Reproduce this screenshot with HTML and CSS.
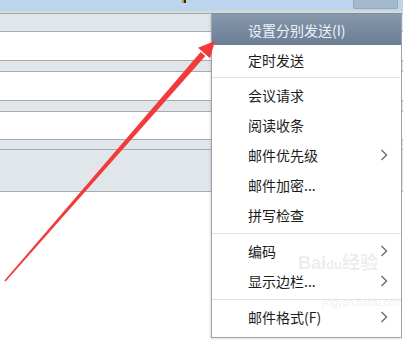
FILE: index.html
```html
<!DOCTYPE html>
<html lang="zh-CN">

<head>
    <meta charset="UTF-8">
    <meta name="viewport" content="width=device-width, initial-scale=1.0">
    <title>邮件选项菜单</title>
    <link rel="stylesheet" href="styles.css">
</head>

<body>
    <div class="screen">
        <div class="titlebar">
            <span class="title-icon"></span>
            <span class="title-btn"></span>
        </div>
        <div class="rule-green"></div>
        <div class="rule-light"></div>
        <div class="rule-dark"></div>

        <div class="band grey h17"></div>
        <div class="band white h28"></div>
        <div class="band grey h10"></div>
        <div class="band white h28"></div>
        <div class="band grey h10"></div>
        <div class="band white h27"></div>
        <div class="band grey h9"></div>
        <div class="band grey h41"></div>
        <div class="band white rest"></div>

        <!-- dropdown menu -->
        <div class="menu">
            <div class="menu-head">设置分别发送(I)</div>
            <div class="menu-item">定时发送</div>
            <div class="menu-sep"></div>
            <div class="menu-item">会议请求</div>
            <div class="menu-item">阅读收条</div>
            <div class="menu-item">邮件优先级
                <svg class="chev" width="8" height="12" viewBox="0 0 8 12"><polyline points="1.5,1 6.5,6 1.5,11" /></svg>
            </div>
            <div class="menu-item">邮件加密...</div>
            <div class="menu-item">拼写检查</div>
            <div class="menu-sep sep-wide"></div>
            <div class="menu-item">编码
                <svg class="chev" width="8" height="12" viewBox="0 0 8 12"><polyline points="1.5,1 6.5,6 1.5,11" /></svg>
            </div>
            <div class="menu-item">显示边栏...
                <svg class="chev" width="8" height="12" viewBox="0 0 8 12"><polyline points="1.5,1 6.5,6 1.5,11" /></svg>
            </div>
            <div class="menu-sep sep-wide"></div>
            <div class="menu-item">邮件格式(F)
                <svg class="chev" width="8" height="12" viewBox="0 0 8 12"><polyline points="1.5,1 6.5,6 1.5,11" /></svg>
            </div>
        </div>

        <!-- watermark -->
        <div class="watermark">
            <span class="wm-big">Bai<b>du</b>经验</span>
            <span class="wm-small">jingyan.baidu.com</span>
        </div>

        <!-- red annotation arrow -->
        <svg class="arrow" width="403" height="341" viewBox="0 0 403 341">
            <polygon points="4.4,280.5 5.6,281.5 205.3,56 200.7,52" />
            <polygon points="215,41 198,47.7 210,58.3" />
        </svg>
    </div>
</body>

</html>
```

FILE: styles.css
```css
body {
    margin: 0;
    font-family: 'Noto Sans CJK SC', 'Noto Sans', sans-serif;
    background-color: #fff;
}

.screen {
    width: 403px;
    height: 341px;
    overflow: hidden;
    position: relative;
    display: flex;
    flex-direction: column;
}

.titlebar {
    height: 10px;
    background-color: #bcd4ec;
    display: flex;
    align-items: flex-start;
    flex-shrink: 0;
}

.title-icon {
    width: 4px;
    height: 3px;
    margin-left: 182px;
    background: linear-gradient(to right, #e08a1c 50%, #2a2a2a 50%);
}

.title-btn {
    width: 45px;
    height: 9px;
    margin-left: auto;
    margin-right: 5px;
    background-color: #a5b8ce;
    border: 1px solid #95a8bf;
    border-top: none;
    box-sizing: border-box;
    border-radius: 0 0 2px 2px;
}

.rule-green {
    height: 1px;
    background-color: #c6d9c4;
    flex-shrink: 0;
}

.rule-light {
    height: 2px;
    background-color: #d3dce5;
    flex-shrink: 0;
}

.rule-dark {
    height: 1px;
    background-color: #a1a9b2;
    flex-shrink: 0;
}

.band {
    border-bottom: 1px solid #a7aaae;
    flex-shrink: 0;
}

.band.grey {
    background-color: #e1e6eb;
}

.band.white {
    background-color: #fff;
}

.h9 { height: 9px; }
.h10 { height: 10px; }
.h17 { height: 17px; }
.h27 { height: 27px; }
.h28 { height: 28px; }
.h41 { height: 41px; }

.band.rest {
    flex: 1;
    border-bottom: none;
}

/* MENU */
.menu {
    position: absolute;
    left: 211px;
    top: 13px;
    width: 191px;
    height: 325px;
    box-sizing: border-box;
    background-color: #fff;
    border: 1px solid #9ea4ab;
    border-top: none;
    box-shadow: -1px 1px 2px rgba(0, 0, 0, 0.12);
}

.menu-head {
    height: 32px;
    line-height: 32px;
    padding-left: 36px;
    font-size: 14px;
    color: #eef2f7;
    background: linear-gradient(#8898ac, #6a7e96);
    border-top: 1px solid #7d8fa4;
    box-sizing: border-box;
}

.menu-item {
    height: 30px;
    line-height: 30px;
    padding-left: 36px;
    font-size: 14px;
    color: #1c1c1c;
    position: relative;
    display: flex;
    align-items: center;
}

.chev {
    margin-left: auto;
    margin-right: 13px;
}

.chev polyline {
    fill: none;
    stroke: #777;
    stroke-width: 1.6;
}

.menu-sep {
    height: 1px;
    background-color: #e2e2e2;
    margin: 2px 0 2px 0;
}

.sep-wide {
    margin: 3px 0 2px 0;
}

/* WATERMARK */
.watermark {
    position: absolute;
    left: 298px;
    top: 256px;
    display: flex;
    flex-direction: column;
    align-items: flex-start;
    color: rgba(160, 160, 160, 0.2);
    pointer-events: none;
}

.wm-big {
    font-family: 'Liberation Sans', 'Noto Sans CJK SC', sans-serif;
    font-size: 18px;
    font-weight: bold;
    line-height: 14px;
}

.wm-big b {
    font-size: 13px;
}

.wm-small {
    font-family: 'Liberation Sans', sans-serif;
    font-size: 10px;
    line-height: 10px;
    margin-top: 26px;
    margin-left: 24px;
}

/* ARROW */
.arrow {
    position: absolute;
    left: 0;
    top: 0;
}

.arrow polygon {
    fill: #f23a3a;
}
```
